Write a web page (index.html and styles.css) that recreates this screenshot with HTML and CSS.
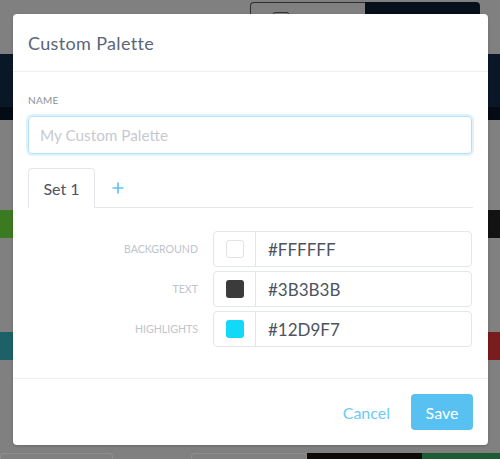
FILE: index.html
```html
<!DOCTYPE html>
<html>
<head>
<meta charset="utf-8">
<link rel="stylesheet" href="styles.css">
</head>
<body>
<div class="page">
  <div class="topbar">
    <div class="btngroup">
      <div class="seg seg-light"><span class="mini-icon"></span></div>
      <div class="seg seg-dark"></div>
    </div>
  </div>
  <div class="navband"><div class="navband-low"></div></div>
  <div class="gap gap-a"></div>
  <div class="strip"><div class="s-green"></div><div class="s-black"></div></div>
  <div class="gap gap-b"></div>
  <div class="strip"><div class="s-teal"></div><div class="s-red"></div></div>
  <div class="gap gap-c"></div>
  <div class="bottomrow">
    <div class="b-box b-box1"></div>
    <div class="b-box b-box2"></div>
    <div class="b-black"></div>
    <div class="b-green"></div>
  </div>
</div>

<div class="modal">
  <div class="modal-header">Custom Palette</div>
  <div class="modal-body">
    <div class="field-label">NAME</div>
    <div class="name-input">My Custom Palette</div>
    <div class="tabs">
      <div class="tab active">Set 1</div>
      <div class="tab-add">
        <svg width="12" height="12" viewBox="0 0 12 12"><path d="M6 0.5V11.5M0.5 6H11.5" stroke="#5ec4f3" stroke-width="1.7" fill="none"/></svg>
      </div>
      <div class="tab-fill"></div>
    </div>
    <div class="rows">
      <div class="row">
        <div class="row-label">Background</div>
        <div class="color-box">
          <div class="swatch-cell"><span class="swatch swatch-white"></span></div>
          <div class="hex">#FFFFFF</div>
        </div>
      </div>
      <div class="row">
        <div class="row-label">Text</div>
        <div class="color-box">
          <div class="swatch-cell"><span class="swatch swatch-dark"></span></div>
          <div class="hex">#3B3B3B</div>
        </div>
      </div>
      <div class="row">
        <div class="row-label">Highlights</div>
        <div class="color-box">
          <div class="swatch-cell"><span class="swatch swatch-cyan"></span></div>
          <div class="hex">#12D9F7</div>
        </div>
      </div>
    </div>
  </div>
  <div class="modal-footer">
    <span class="cancel">Cancel</span>
    <span class="save">Save</span>
  </div>
</div>
</body>
</html>
```

FILE: styles.css
```css
* { box-sizing: border-box; }
html, body {
  margin: 0;
  padding: 0;
  width: 500px;
  height: 459px;
  overflow: hidden;
  background: #808080;
  font-family: Lato, "Liberation Sans", sans-serif;
}
.page {
  width: 500px;
  height: 459px;
  display: flex;
  flex-direction: column;
  background: #808080;
}
.topbar {
  height: 54px;
  padding-top: 2px;
  padding-left: 250px;
}
.btngroup {
  width: 230px;
  height: 52px;
  display: flex;
}
.seg { flex: none; width: 115px; }
.seg-light {
  border: 1px solid #2e2e2e;
  border-right: none;
  border-radius: 4px 0 0 0;
  padding: 9px 0 0 22px;
}
.mini-icon {
  display: block;
  width: 16px;
  height: 14px;
  border: 1.5px solid #333;
  border-radius: 2px;
}
.seg-dark {
  background: #06101b;
  border-radius: 0 4px 0 0;
}
.navband {
  height: 66px;
  background: #0a1727;
  display: flex;
  flex-direction: column;
  justify-content: flex-end;
}
.navband-low { height: 13px; background: #040b14; }
.gap-a { height: 90px; }
.gap-b { height: 94px; }
.gap-c { height: 93px; }
.strip { height: 28px; display: flex; }
.strip > div { flex: 1; }
.s-green { background: #3b7a20; }
.s-black { background: #121212; }
.s-teal { background: #1e6068; }
.s-red { background: #7a1b1d; }
.bottomrow { height: 6px; display: flex; }
.b-box { border: 1px solid #8e8e8e; border-bottom: none; border-radius: 4px 4px 0 0; }
.b-box1 { width: 113px; margin-right: 78px; }
.b-box2 { width: 116px; }
.b-black { width: 115px; background: #0e0a08; }
.b-green { flex: 1; background: #1d5c34; }

.modal {
  position: absolute;
  top: 14px;
  left: 13px;
  width: 475px;
  height: 431px;
  background: #fff;
  border-radius: 4px;
  display: flex;
  flex-direction: column;
  box-shadow: 0 1px 3px rgba(0,0,0,0.2);
}
.modal-header {
  height: 58px;
  padding: 0 15px;
  display: flex;
  align-items: center;
  border-bottom: 1px solid #eceef1;
  font-size: 18px;
  letter-spacing: 0.35px;
  color: #5b6579;
}
.modal-body {
  flex: 1;
  padding: 21px 16px 0 15px;
}
.field-label {
  height: 14px;
  line-height: 14px;
  font-size: 10px;
  color: #8b909a;
  letter-spacing: 0.3px;
  margin-bottom: 9px;
}
.name-input {
  height: 38px;
  border: 1px solid #b4dff6;
  box-shadow: 0 0 0 2px #e0f2fd;
  border-radius: 4px;
  padding-left: 11px;
  display: flex;
  align-items: center;
  font-size: 15.3px;
  color: #c6cad0;
}
.tabs {
  margin-top: 14px;
  height: 40px;
  display: flex;
}
.tab {
  width: 67px;
  border: 1px solid #e3e6ea;
  border-bottom: none;
  border-radius: 4px 4px 0 0;
  display: flex;
  align-items: center;
  justify-content: center;
  font-size: 16px;
  color: #4d5360;
}
.tab-add {
  width: 45px;
  display: flex;
  align-items: center;
  justify-content: center;
  border-bottom: 1px solid #e3e6ea;
}
.tab-fill {
  flex: 1;
  border-bottom: 1px solid #e3e6ea;
  margin-right: -1px;
}
.rows {
  margin-top: 23px;
  display: flex;
  flex-direction: column;
  gap: 4px;
}
.row {
  height: 36px;
  display: grid;
  grid-template-columns: 1fr 259px;
  column-gap: 15px;
  align-items: center;
}
.row-label {
  text-align: right;
  font-size: 10.6px;
  text-transform: uppercase;
  color: #c0c4cb;
}
.color-box {
  height: 36px;
  border: 1px solid #e3e6ea;
  border-radius: 4px;
  display: flex;
}
.swatch-cell {
  width: 42px;
  border-right: 1px solid #e3e6ea;
  display: flex;
  align-items: center;
  justify-content: center;
}
.swatch {
  width: 18px;
  height: 18px;
  border-radius: 3px;
}
.swatch-white { background: #fff; border: 1px solid #e0e3e8; }
.swatch-dark { background: #3b3b3b; }
.swatch-cyan { background: #12d9f7; }
.hex {
  display: flex;
  align-items: center;
  padding-left: 12px;
  font-size: 17px;
  color: #4d5360;
}
.modal-footer {
  height: 67px;
  border-top: 1px solid #eceef1;
  display: flex;
  align-items: center;
  justify-content: flex-end;
  padding-right: 15px;
}
.cancel {
  font-size: 16px;
  color: #6ccaf5;
  margin-right: 21px;
}
.save {
  width: 62px;
  height: 36px;
  border-radius: 4px;
  background: #58c1f2;
  color: #fff;
  font-size: 16px;
  display: flex;
  align-items: center;
  justify-content: center;
}
```
